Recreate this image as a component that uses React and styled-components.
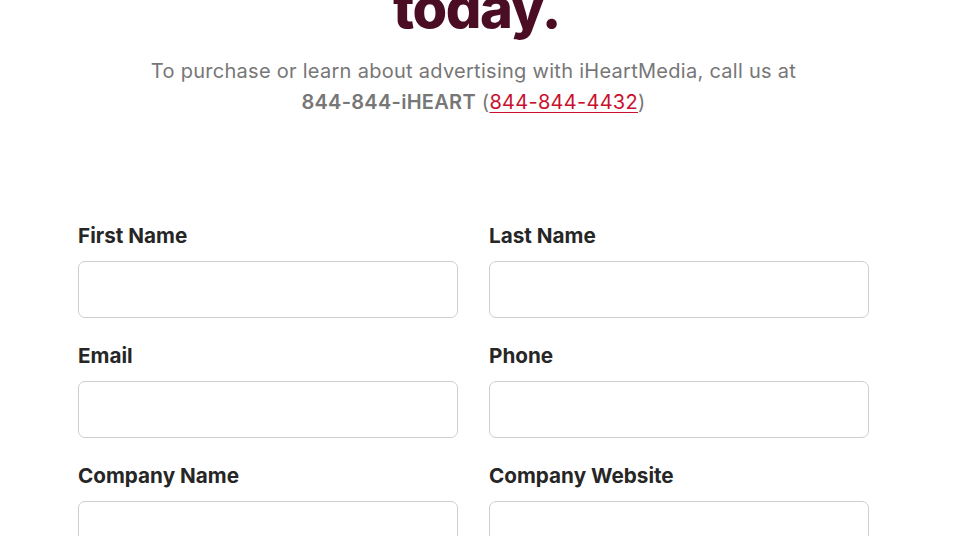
import React from "react";
import styled, { createGlobalStyle } from "styled-components";

const GlobalStyle = createGlobalStyle`
  body {
    margin: 0;
    background: #ffffff;
    font-family: Inter, "Liberation Sans", sans-serif;
    overflow: hidden;
  }
`;

const Page = styled.div`
  width: 947px;
  box-sizing: border-box;
  padding: 0 78px;
`;

const Intro = styled.header`
  display: flex;
  flex-direction: column;
  align-items: center;
  text-align: center;
`;

const Heading = styled.h1`
  margin: -20px 0 0 6px;
  font-size: 56px;
  line-height: 1;
  font-weight: 800;
  letter-spacing: -0.025em;
  color: #4a0d24;
`;

const Lead = styled.p`
  margin: 20px 0 0;
  font-size: 20px;
  line-height: 31px;
  letter-spacing: 0.014em;
  color: #777777;
`;

const Strong = styled.strong`
  font-weight: 600;
`;

const PhoneLink = styled.a`
  color: #c8102e;
  text-decoration: underline;
  text-decoration-thickness: 1px;
  text-underline-offset: 3px;
`;

const Form = styled.form`
  display: grid;
  grid-template-columns: 1fr 1fr;
  column-gap: 31px;
  row-gap: 26px;
  margin-top: 106px;
`;

const Field = styled.div`
  display: flex;
  flex-direction: column;
  gap: 13px;
`;

const Label = styled.label`
  font-size: 20.7px;
  line-height: 24px;
  font-weight: 700;
  color: #262626;
`;

const Input = styled.input`
  box-sizing: border-box;
  height: 57px;
  width: 100%;
  border: 1px solid #cfcfcf;
  border-radius: 7px;
  padding: 0 16px;
  font-family: inherit;
  font-size: 18px;
  background: #fff;

  &:focus {
    outline: none;
    border-color: #4a0d24;
  }
`;

const fields = [
  { id: "firstName", label: "First Name" },
  { id: "lastName", label: "Last Name" },
  { id: "email", label: "Email", type: "email" },
  { id: "phone", label: "Phone", type: "tel" },
  { id: "companyName", label: "Company Name" },
  { id: "companyWebsite", label: "Company Website", type: "url" },
];

const App = () => {
  return (
    <Page>
      <GlobalStyle />
      <Intro>
        <Heading>today.</Heading>
        <Lead>
          To purchase or learn about advertising with iHeartMedia, call us at
          <br />
          <Strong>844-844-iHEART</Strong> (
          <PhoneLink href="tel:8448444432">844-844-4432</PhoneLink>)
        </Lead>
      </Intro>
      <Form>
        {fields.map((f) => (
          <Field key={f.id}>
            <Label htmlFor={f.id}>{f.label}</Label>
            <Input id={f.id} type={f.type || "text"} />
          </Field>
        ))}
      </Form>
    </Page>
  );
};

export default App;
